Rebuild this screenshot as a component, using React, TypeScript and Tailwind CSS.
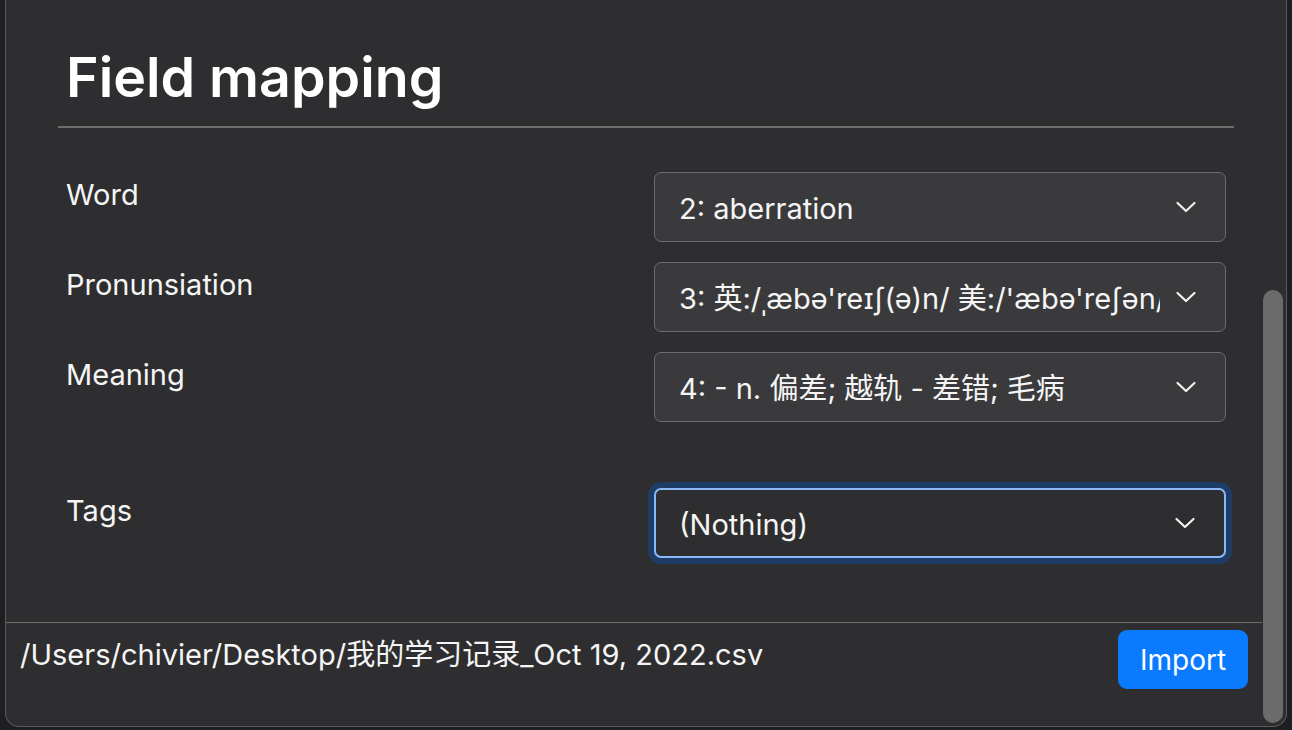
import React from "react";

function Chevron() {
  return (
    <svg
      width="22"
      height="14"
      viewBox="0 0 22 14"
      fill="none"
      className="pointer-events-none absolute right-[28px] top-1/2 -translate-y-1/2"
    >
      <path d="M2.5 3 L11 11 L19.5 3" stroke="#f2f2f2" strokeWidth="2.2" strokeLinecap="round" strokeLinejoin="round" />
    </svg>
  );
}

function Select({ value, focused }: { value: string; focused?: boolean }) {
  return (
    <div
      className={
        focused
          ? "relative flex h-[70px] w-[572px] items-center rounded-[7px] border-2 border-[#8ab8f8] bg-[#2e2e30] ring-[6px] ring-[#1d3c66]"
          : "relative flex h-[70px] w-[572px] items-center rounded-[7px] border border-[#6c6c6e] bg-[#3a3a3c]"
      }
    >
      <div className={focused ? "w-full pl-[23px] pr-[64px] pt-[4px]" : "w-full pl-[24px] pr-[65px] pt-[4px]"}>
        <div className="overflow-hidden whitespace-nowrap text-[29px] leading-[36px] text-[#f5f5f5]">{value}</div>
      </div>
      <Chevron />
    </div>
  );
}

function Row({ label, value, focused, extra }: { label: string; value: string; focused?: boolean; extra?: boolean }) {
  return (
    <div className={extra ? "mt-[66px] flex items-start" : "mb-[20px] flex items-start"}>
      <div className="w-[588px] pt-[5px] text-[29px] leading-[36px] text-[#f5f5f5]">{label}</div>
      <Select value={value} focused={focused} />
    </div>
  );
}

export default function App() {
  return (
    <div className="h-[730px] w-[1292px] overflow-hidden bg-[#1f1f21] px-[5px] font-['Inter','Noto_Sans_CJK_SC','DejaVu_Sans',sans-serif]">
      <div className="flex h-[727px] overflow-hidden rounded-b-[14px] border-x border-b border-[#5a5a5c] bg-[#2e2e30]">
        <div className="flex flex-1 flex-col">
          <div className="flex-1 pl-[52px] pr-[28px] pt-[43px]">
            <h2 className="px-[8px] text-[55.5px] font-semibold leading-[68px] text-white">Field mapping</h2>
            <div className="mt-[15px] h-[2px] bg-[#6e6e6e]" />
            <div className="px-[8px] pt-[44px]">
              <Row label="Word" value="2: aberration" />
              <Row label="Pronunsiation" value="3: 英:/ˌæbə'reɪʃ(ə)n/ 美:/'æbə'reʃən/" />
              <Row label="Meaning" value="4: - n. 偏差; 越轨 - 差错; 毛病" />
              <Row label="Tags" value="(Nothing)" focused extra />
            </div>
          </div>
          <div className="flex h-[104px] items-start justify-between border-t border-[#6e6e6e] pl-[14px] pr-[14px] pt-[7px]">
            <div className="mt-[7px] text-[29px] leading-[36px] text-[#f5f5f5]">
              /Users/chivier/Desktop/我的学习记录_Oct 19, 2022.csv
            </div>
            <button className="flex h-[59px] w-[130px] items-center justify-center rounded-[9px] bg-[#0a7bff] text-[28px] leading-[36px] text-white">
              Import
            </button>
          </div>
        </div>
        <div className="flex w-[24px] flex-col pb-[3px] pl-[1px] pr-[3px] pt-[290px]">
          <div className="flex-1 rounded-full bg-[#6b6b6b]" />
        </div>
      </div>
    </div>
  );
}
